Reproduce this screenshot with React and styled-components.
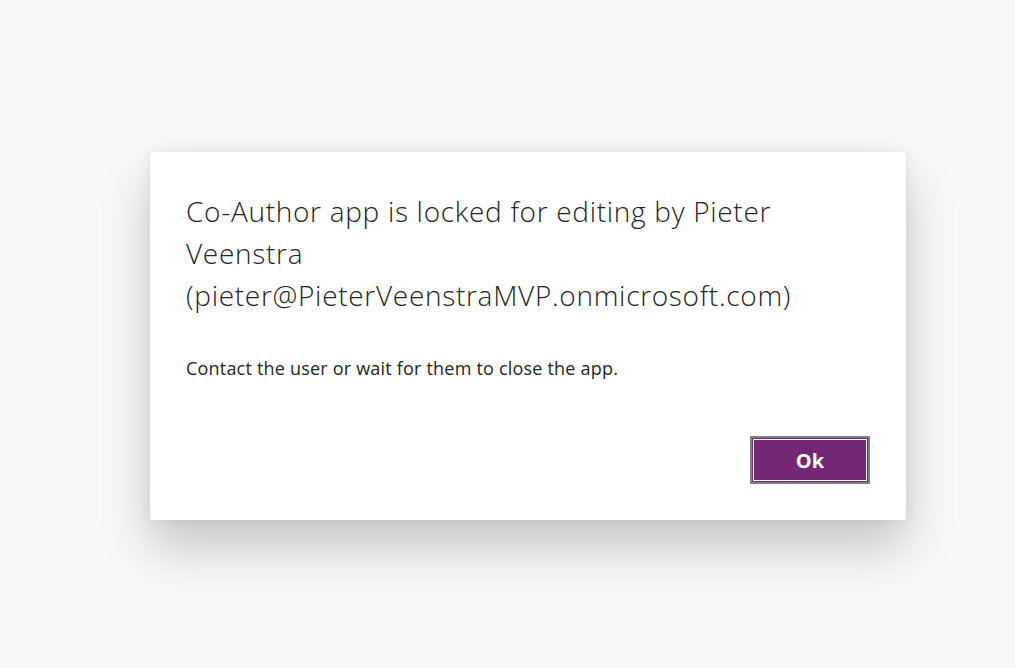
import React from "react";
import styled, { createGlobalStyle } from "styled-components";

const GlobalStyle = createGlobalStyle`
  html, body {
    margin: 0;
    padding: 0;
    background: #f8f8f8;
  }
  body {
    font-family: "Segoe UI", "Open Sans", "Noto Sans", sans-serif;
  }
`;

const Page = styled.div`
  width: 1015px;
  height: 668px;
  display: flex;
  align-items: center;
  justify-content: center;
  padding: 4px 0 0 41px;
  box-sizing: border-box;
`;

const Dialog = styled.div`
  width: 756px;
  height: 368px;
  box-sizing: border-box;
  padding: 38px 36px 36px 36px;
  background: #ffffff;
  border-radius: 3px;
  box-shadow: 0 28px 50px rgba(0, 0, 0, 0.2), 0 0 14px rgba(0, 0, 0, 0.07);
  display: flex;
  flex-direction: column;
`;

const Title = styled.h2`
  margin: 0;
  font-size: 28px;
  line-height: 42px;
  font-weight: 300;
  letter-spacing: 0.7px;
  color: #252525;
  max-width: 660px;
`;

const Message = styled.p`
  margin: 40px 0 0;
  font-size: 18px;
  line-height: 24px;
  letter-spacing: 0.2px;
  color: #252525;
`;

const Footer = styled.div`
  margin-top: auto;
  display: flex;
  justify-content: flex-end;
`;

const OkButton = styled.button`
  width: 120px;
  height: 48px;
  box-sizing: border-box;
  border: 2px solid #7f7f7f;
  background: ${(props) => props.bgColor};
  box-shadow: inset 0 0 0 1px ${(props) => props.bgColor}, inset 0 0 0 2px #ffffff;
  color: #fff;
  font-family: inherit;
  font-size: 20px;
  font-weight: 700;
  cursor: pointer;
`;

const App = () => {
  return (
    <>
      <GlobalStyle />
      <Page>
        <Dialog role="dialog">
          <Title>
            Co-Author app is locked for editing by Pieter Veenstra
            (pieter@PieterVeenstraMVP.onmicrosoft.com)
          </Title>
          <Message>Contact the user or wait for them to close the app.</Message>
          <Footer>
            <OkButton bgColor="#742774">Ok</OkButton>
          </Footer>
        </Dialog>
      </Page>
    </>
  );
};

export default App;
